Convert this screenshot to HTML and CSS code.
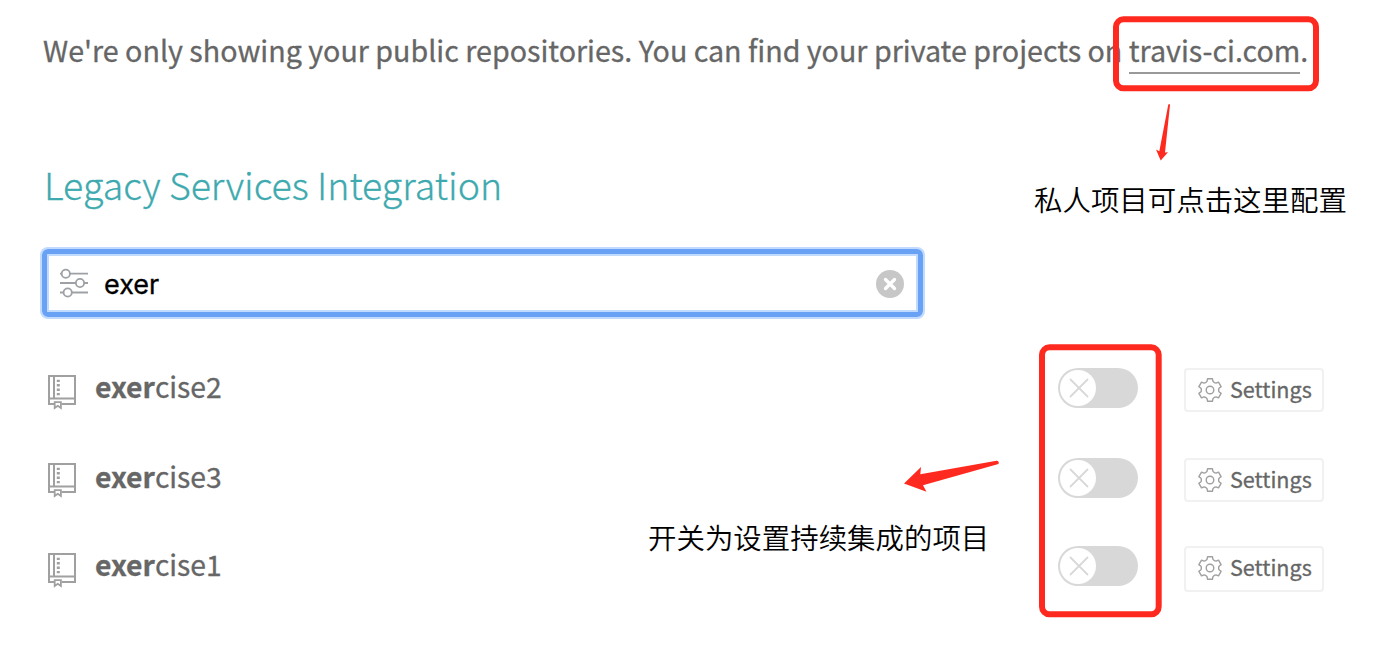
FILE: index.html
```html
<!DOCTYPE html>
<html lang="en">
<head>
<meta charset="utf-8">
<title>Repositories</title>
<link rel="stylesheet" href="styles.css">
</head>
<body>
<svg class="defs" width="0" height="0" aria-hidden="true">
  <symbol id="book" viewBox="0 0 30 36">
    <g fill="none" stroke="#a0a0a0" stroke-width="2">
      <path d="M7.5 30H2V2h26v28H14.5M2 24.5h26M7 2v22.5"/>
      <path d="M11.300 5.700v16" stroke-width="3" stroke-dasharray="2.400 2"/>
      <path d="M7.7 34v-5.8h6.2V34l-3.1-2.2z" stroke-width="1.8"/>
    </g>
  </symbol>
  <symbol id="gear" viewBox="-12 -12 24 24">
    <g fill="none" stroke="#a0a0a0" stroke-width="1.4" stroke-linejoin="round">
      <path d="M-2.4-11.3H2.4L3-8.7Q4.2-7 6-6.9L8.5-7.9L11.1-3.4L9-1.75Q8.3 0 9 1.75L11.1 3.4L8.5 7.9L6 6.9Q4.2 7 3 8.7L2.4 11.3H-2.4L-3 8.7Q-4.2 7-6 6.9L-8.5 7.9L-11.1 3.4L-9 1.75Q-8.3 0-9-1.75L-11.1-3.4L-8.5-7.9L-6-6.9Q-4.2-7-3-8.7Z"/>
      <circle r="3.8"/>
    </g>
  </symbol>
</svg>
<main class="page">
  <p class="notice">We're only showing your public repositories. You can find your private projects on <a class="link">travis-ci.com</a>.</p>
  <h2 class="title">Legacy Services Integration</h2>
  <div class="search">
    <svg class="filter" viewBox="0 0 28 30" fill="none" stroke="#9da1a5" stroke-width="1.8">
      <path d="M0 5.7h1.5M10 5.7h18M0 15h16M24 15h4M0 24.5h3.5M12 24.5h16"/>
      <circle cx="5.8" cy="5.7" r="4.1"/><circle cx="20" cy="15" r="4.1"/><circle cx="7.7" cy="24.5" r="4.1"/>
    </svg>
    <span class="query">exer</span>
    <svg class="clear" viewBox="0 0 28 28"><circle cx="14" cy="14" r="14" fill="#c7c7c7"/><path d="M9.5 9.5l9 9m0-9l-9 9" stroke="#fff" stroke-width="3.3" stroke-linecap="round"/></svg>
  </div>
  <ul class="repos">
    <li class="repo">
      <svg class="book"><use href="#book"/></svg>
      <span class="name"><b>exer</b>cise2</span>
      <span class="toggle"><svg class="knob" viewBox="0 0 36 36"><path d="M10.500 9.500l17 17m0-17l-17 17"/></svg></span>
      <a class="settings"><svg class="gear"><use href="#gear"/></svg><span class="label">Settings</span></a>
    </li>
    <li class="repo repo-mid">
      <svg class="book"><use href="#book"/></svg>
      <span class="name"><b>exer</b>cise3</span>
      <span class="toggle"><svg class="knob" viewBox="0 0 36 36"><path d="M10.500 9.500l17 17m0-17l-17 17"/></svg></span>
      <a class="settings"><svg class="gear"><use href="#gear"/></svg><span class="label">Settings</span></a>
    </li>
    <li class="repo repo-last">
      <svg class="book"><use href="#book"/></svg>
      <span class="name"><b>exer</b>cise1</span>
      <span class="toggle"><svg class="knob" viewBox="0 0 36 36"><path d="M10.500 9.500l17 17m0-17l-17 17"/></svg></span>
      <a class="settings"><svg class="gear"><use href="#gear"/></svg><span class="label">Settings</span></a>
    </li>
  </ul>
  <svg class="marks" viewBox="0 0 1382 654">
    <g fill="none" stroke="#ff2a1f" stroke-width="6">
      <rect x="1116" y="19.300" width="200" height="69" rx="7.500"/>
      <rect x="1042" y="347.300" width="116.700" height="267" rx="7.500"/>
    </g>
    <g fill="#ff2a1f">
      <path d="M1168.300 104.500Q1169.600 103.300 1170 105L1165 152.500L1168 152.300L1160.700 160.500L1156 149.500L1159.300 151.300Z"/>
      <path d="M904 483.500L921 467L920.300 474.300L996.500 460.800Q999.500 461 998.500 464L923 485.200L926.500 491.700Z"/>
    </g>
  </svg>
  <span class="note note-private">私人项目可点击这里配置</span>
  <span class="note note-toggle">开关为设置持续集成的项目</span>
</main>
</body>
</html>
```
FILE: styles.css
```css
* { box-sizing: border-box; }
body { margin: 0; background: #fff; }
.defs { position: absolute; }
.page {
  position: relative;
  width: 1382px;
  height: 654px;
  padding: 27px 58px 0 41px;
  overflow: hidden;
  color: #666;
  font-family: "Noto Sans CJK SC", sans-serif;
}
.notice { margin: 0 0 0 2px; font-size: 28.65px; line-height: 46px; white-space: nowrap; -webkit-text-stroke: 0.3px #666; }
.link { display: inline-block; height: 47px; border-bottom: 2px solid #999; }
.title { margin: 82px 0 0 3px; color: #3eaaaf; font-size: 37.5px; font-weight: 300; line-height: 56px; white-space: nowrap; -webkit-text-stroke: 0.3px #3eaaaf; }
.search {
  display: flex;
  align-items: center;
  width: 881px;
  height: 68px;
  margin: 37px 0 0 1px;
  padding: 0 14px 0 13px;
  border: 5px solid #69a2f5;
  border-radius: 6px;
  box-shadow: 0 0 0 2px #c1daff, inset 0 0 0 2px #c1daff;
}
.filter { width: 28px; height: 30px; }
.query { flex: 1; margin-left: 16px; padding-top: 3px; color: #000; font: 27px/40px Inter, sans-serif; -webkit-text-stroke: 0.3px #000; }
.clear { width: 28px; height: 28px; margin-top: 2px; }
.repos { margin: 51px 0 0; padding: 0 0 0 6px; list-style: none; }
.repo { display: flex; align-items: flex-start; height: 90px; }
.repo-mid { height: 88px; }
.book { width: 30px; height: 36px; margin-top: 6px; }
.repo-mid .book { margin-top: 4px; }
.name { flex: 1; margin: -2px 0 0 18px; font-size: 28.3px; line-height: 40px; -webkit-text-stroke: 0.3px #666; }
.toggle { width: 80px; height: 40px; padding: 2px; border-radius: 20px; background: #d8d8d8; }
.knob { display: block; width: 36px; height: 36px; border-radius: 50%; background: #fff; fill: none; stroke: #d8d8d8; stroke-width: 1.8; stroke-linecap: round; }
.settings {
  display: flex;
  align-items: center;
  width: 140px;
  height: 44px;
  margin-left: 46px;
  padding-left: 12px;
  border: 2px solid #f1f1f1;
  border-radius: 4px;
}
.label { padding-bottom: 3px; font-size: 21.6px; line-height: 37px; -webkit-text-stroke: 0.3px #666; }
.repo-last .settings { height: 46px; padding-bottom: 2px; }
.gear { width: 24px; height: 24px; margin-right: 8px; }
.marks { position: absolute; inset: 0; width: 1382px; height: 654px; }
.note { position: absolute; color: #000; font-size: 28.45px; font-weight: 350; line-height: 40px; white-space: nowrap; }
.note-private { left: 1034px; top: 179px; }
.note-toggle { left: 648px; top: 517px; }
```
